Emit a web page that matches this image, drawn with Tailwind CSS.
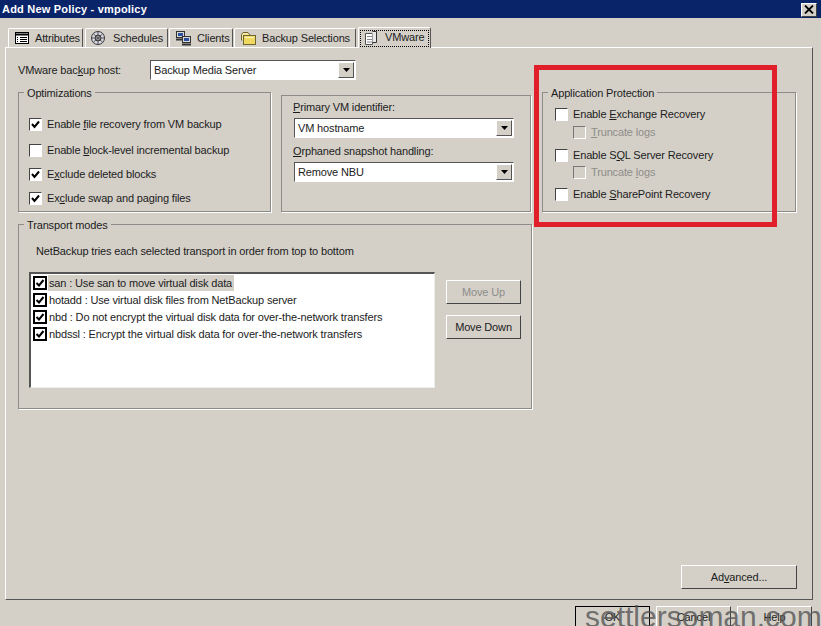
<!DOCTYPE html>
<html lang="en">
<head>
  <meta charset="UTF-8" />
  <title>Add New Policy - vmpolicy</title>
  <script src="https://cdn.jsdelivr.net/npm/@tailwindcss/browser@4"></script>
</head>
<body class="relative w-[821px] h-[626px] overflow-hidden bg-[#d4d0c8] text-[11px] tracking-[-0.15px] leading-[14px] text-[#1c1c1c] font-['Liberation_Sans',sans-serif]">

  <!-- Title bar -->
  <div class="h-[18px] bg-[#0a246a] flex items-center justify-between pl-[2px] pr-[4px] text-white font-bold tracking-[0.2px]">
    <span>Add New Policy - vmpolicy</span>
    <span class="w-[16px] h-[14px] mt-[1px] bg-[#d4d0c8] flex items-center justify-center border-t border-l border-white border-r border-b border-r-[#404040] border-b-[#404040]">
      <svg width="10" height="9" viewBox="0 0 10 9"><path d="M1 0.5L9 8.5M9 0.5L1 8.5" stroke="#000" stroke-width="1.8"/></svg>
    </span>
  </div>

  <!-- Tabs -->
  <div class="flex items-end h-[29px] pl-[8px] whitespace-nowrap">
    <div class="w-[75px] h-[19px] border-t border-l border-white border-r border-r-[#555] rounded-t-[2px] flex items-center pl-[5px] gap-[5px]">
      <svg class="shrink-0" width="16" height="14" viewBox="0 0 16 14"><rect x="1.5" y="1.5" width="13" height="11" fill="#fff" stroke="#000"/><path d="M1 3.5H15" stroke="#000" stroke-width="2"/><path d="M3 6.5H4M3 8.5H4M3 10.5H4M6 6.5H13M6 8.5H13M6 10.5H13" stroke="#000"/></svg>
      <span>Attributes</span>
    </div>
    <div class="ml-[2px] w-[83px] h-[19px] border-t border-l border-white border-r border-r-[#555] rounded-t-[2px] flex items-center pl-[4px] gap-[6px]">
      <svg class="shrink-0" width="17" height="16" viewBox="0 0 17 16"><circle cx="8" cy="8" r="6.5" fill="#d8d8e4" stroke="#333"/><path d="M8 1.5V14.5M1.5 8H14.5M3.5 4L12.5 12M12.5 4L3.5 12" stroke="#555"/><circle cx="8" cy="8" r="3" fill="none" stroke="#333"/></svg>
      <span>Schedules</span>
    </div>
    <div class="ml-[1px] w-[64px] h-[19px] border-t border-l border-white border-r border-r-[#555] rounded-t-[2px] flex items-center pl-[5px] gap-[5px]">
      <svg class="shrink-0" width="17" height="15" viewBox="0 0 17 15"><rect x="1.5" y="0.5" width="8" height="6" fill="#d8d8d8" stroke="#333"/><rect x="3" y="2" width="5" height="3" fill="#2a50a0"/><path d="M1 8.5H9" stroke="#333" stroke-width="2"/><rect x="7.5" y="5.5" width="8" height="6" fill="#d8d8d8" stroke="#333"/><rect x="9" y="7" width="5" height="3" fill="#2a50a0"/><path d="M7 13.5H16" stroke="#333" stroke-width="2"/></svg>
      <span>Clients</span>
    </div>
    <div class="ml-[1px] w-[122px] h-[19px] border-t border-l border-white border-r border-r-[#555] rounded-t-[2px] flex items-center pl-[5px] gap-[5px]">
      <svg class="shrink-0" width="17" height="15" viewBox="0 0 17 15"><path d="M1.5 9.5V3.5L3 1.5H8L10 4" fill="#f4e7a0" stroke="#6e6430"/><rect x="3.5" y="4.5" width="12" height="9" fill="#f0d860" stroke="#6e6430"/><path d="M5 6.5H14" stroke="#fff6c0"/></svg>
      <span>Backup Selections</span>
    </div>
    <div class="ml-[2px] w-[73px] h-[21px] bg-[#d4d0c8] border-t border-l border-white border-r border-r-[#555] rounded-t-[2px] flex items-center p-[1px] relative z-10 -mb-[1px]">
      <div class="flex-1 h-[17px] border border-dotted border-black flex items-center pl-[3px] gap-[6px]">
        <svg class="shrink-0" width="15" height="15" viewBox="0 0 15 15"><path d="M1.5 2.5H8.5V13.5H1.5Z" fill="#fff" stroke="#555"/><path d="M8.5 0.5H12.5V11.5H8.5" fill="#e8e8e8" stroke="#333"/><path d="M3 5.5H8M3 8.5H8M3 11H8" stroke="#888"/></svg>
        <span class="-mt-[2px]">VMware</span>
      </div>
    </div>
  </div>

  <!-- Tab panel -->
  <div class="ml-[5px] w-[808px] h-[553px] border-t border-l border-white border-r border-b border-r-[#555] border-b-[#555] flex flex-col">
    <div class="flex flex-1">
      <!-- left column -->
      <div class="w-[536px] pl-[12px] pt-[12px]">
        <div class="flex items-center h-[20px]">
          <span class="w-[132px] -mt-[1px]">VMware bac<u>k</u>up host:</span>
          <div class="w-[206px] h-[20px] bg-white border-t border-l border-[#555] border-r border-b border-r-white border-b-white flex items-center justify-between pl-[3px] pr-[1px]">
            <span>Backup Media Server</span>
            <span class="w-[16px] h-[16px] bg-[#d4d0c8] border-t border-l border-white border-r border-b border-r-[#555] border-b-[#555] flex items-center justify-center"><svg width="7" height="4" viewBox="0 0 7 4"><path d="M0 0H7L3.5 4Z" fill="#000"/></svg></span>
          </div>
        </div>
        <div class="flex mt-[12px]">
          <!-- Optimizations -->
          <div class="relative w-[253px] h-[120px] border border-[#8e8c88] shadow-[1px_1px_0_#fff] pl-[10px] pt-[23px]">
            <span class="absolute -top-[7px] left-[5px] bg-[#d4d0c8] px-[3px]">Optimizations</span>
            <div class="flex items-center h-[16px] gap-[5px]">
              <span class="w-[13px] h-[13px] bg-white border-t border-l border-[#444] border-r border-b border-r-white border-b-white flex items-center justify-center"><svg width="9" height="9" viewBox="0 0 9 9"><path d="M1 4L3.5 7L8 1.5" fill="none" stroke="#000" stroke-width="2"/></svg></span>
              <span>Enable <u>f</u>ile recovery from VM backup</span>
            </div>
            <div class="flex items-center h-[16px] gap-[5px] mt-[10px]">
              <span class="w-[13px] h-[13px] bg-white border-t border-l border-[#444] border-r border-b border-r-white border-b-white"></span>
              <span>Enable <u>b</u>lock-level incremental backup</span>
            </div>
            <div class="flex items-center h-[16px] gap-[5px] mt-[8px]">
              <span class="w-[13px] h-[13px] bg-white border-t border-l border-[#444] border-r border-b border-r-white border-b-white flex items-center justify-center"><svg width="9" height="9" viewBox="0 0 9 9"><path d="M1 4L3.5 7L8 1.5" fill="none" stroke="#000" stroke-width="2"/></svg></span>
              <span>E<u>x</u>clude deleted blocks</span>
            </div>
            <div class="flex items-center h-[16px] gap-[5px] mt-[8px]">
              <span class="w-[13px] h-[13px] bg-white border-t border-l border-[#444] border-r border-b border-r-white border-b-white flex items-center justify-center"><svg width="9" height="9" viewBox="0 0 9 9"><path d="M1 4L3.5 7L8 1.5" fill="none" stroke="#000" stroke-width="2"/></svg></span>
              <span>Ex<u>c</u>lude swap and paging files</span>
            </div>
          </div>
          <!-- VM identifier -->
          <div class="ml-[10px] mt-[3px] w-[250px] h-[117px] border border-[#8e8c88] shadow-[1px_1px_0_#fff] pl-[11px] pt-[4px]">
            <div class="h-[14px]"><u>P</u>rimary VM identifier:</div>
            <div class="mt-[4px] ml-[1px] w-[220px] h-[20px] bg-white border-t border-l border-[#555] border-r border-b border-r-white border-b-white flex items-center justify-between pl-[3px] pr-[1px]">
              <span>VM hostname</span>
              <span class="w-[16px] h-[16px] bg-[#d4d0c8] border-t border-l border-white border-r border-b border-r-[#555] border-b-[#555] flex items-center justify-center"><svg width="7" height="4" viewBox="0 0 7 4"><path d="M0 0H7L3.5 4Z" fill="#000"/></svg></span>
            </div>
            <div class="mt-[6px] h-[14px]"><u>O</u>rphaned snapshot handling:</div>
            <div class="mt-[4px] ml-[1px] w-[220px] h-[20px] bg-white border-t border-l border-[#555] border-r border-b border-r-white border-b-white flex items-center justify-between pl-[3px] pr-[1px]">
              <span>Remove NBU</span>
              <span class="w-[16px] h-[16px] bg-[#d4d0c8] border-t border-l border-white border-r border-b border-r-[#555] border-b-[#555] flex items-center justify-center"><svg width="7" height="4" viewBox="0 0 7 4"><path d="M0 0H7L3.5 4Z" fill="#000"/></svg></span>
            </div>
          </div>
        </div>
        <!-- Transport modes -->
        <div class="relative mt-[12px] w-[514px] h-[185px] border border-[#8e8c88] shadow-[1px_1px_0_#fff] pl-[10px] pt-[47px]">
          <span class="absolute -top-[7px] left-[5px] bg-[#d4d0c8] px-[3px]">Transport modes</span>
          <span class="absolute top-[19px] left-[17px]">NetBackup tries each selected transport in order from top to bottom</span>
          <div class="flex">
            <div class="w-[406px] h-[116px] bg-white border-t-2 border-l-2 border-[#555] border-r border-b border-r-[#eee] border-b-[#eee] pl-[2px] whitespace-nowrap">
              <div class="flex items-center h-[17px]">
                <span class="w-[14px] h-[14px] border-2 border-black flex items-center justify-center mr-[1px]"><svg width="10" height="10" viewBox="0 0 10 10"><path d="M1.5 5L4 7.5L8.5 2" fill="none" stroke="#000" stroke-width="2"/></svg></span>
                <span class="bg-[#d4d0c8] w-[186px] h-[16px] leading-[16px] pl-[1px]">san : Use san to move virtual disk data</span>
              </div>
              <div class="flex items-center h-[17px]">
                <span class="w-[14px] h-[14px] border-2 border-black flex items-center justify-center mr-[1px]"><svg width="10" height="10" viewBox="0 0 10 10"><path d="M1.5 5L4 7.5L8.5 2" fill="none" stroke="#000" stroke-width="2"/></svg></span>
                <span class="pl-[1px]">hotadd : Use virtual disk files from NetBackup server</span>
              </div>
              <div class="flex items-center h-[17px]">
                <span class="w-[14px] h-[14px] border-2 border-black flex items-center justify-center mr-[1px]"><svg width="10" height="10" viewBox="0 0 10 10"><path d="M1.5 5L4 7.5L8.5 2" fill="none" stroke="#000" stroke-width="2"/></svg></span>
                <span class="pl-[1px]">nbd : Do not encrypt the virtual disk data for over-the-network transfers</span>
              </div>
              <div class="flex items-center h-[17px]">
                <span class="w-[14px] h-[14px] border-2 border-black flex items-center justify-center mr-[1px]"><svg width="10" height="10" viewBox="0 0 10 10"><path d="M1.5 5L4 7.5L8.5 2" fill="none" stroke="#000" stroke-width="2"/></svg></span>
                <span class="pl-[1px]">nbdssl : Encrypt the virtual disk data for over-the-network transfers</span>
              </div>
            </div>
            <div class="ml-[11px] mt-[8px]">
              <div class="w-[75px] h-[24px] border-t border-l border-white border-r border-b border-r-[#444] border-b-[#444] flex items-center justify-center text-[#8f8d88]">Move Up</div>
              <div class="mt-[11px] w-[75px] h-[24px] border-t border-l border-white border-r border-b border-r-[#444] border-b-[#444] flex items-center justify-center">Move Down</div>
            </div>
          </div>
        </div>
      </div>
      <!-- right column -->
      <div class="pt-[44px]">
        <div class="relative w-[254px] h-[120px] border border-[#8e8c88] shadow-[1px_1px_0_#fff] pl-[12px] pt-[13px]">
          <span class="absolute -top-[7px] left-[5px] bg-[#d4d0c8] px-[3px]">Application Protection</span>
          <div class="flex items-center h-[16px] gap-[5px]">
            <span class="w-[13px] h-[13px] bg-white border-t border-l border-[#444] border-r border-b border-r-white border-b-white"></span>
            <span>Enable <u>E</u>xchange Recovery</span>
          </div>
          <div class="flex items-center h-[16px] gap-[5px] mt-[2px] ml-[18px] text-[#8f8d88]">
            <span class="w-[13px] h-[13px] bg-[#d4d0c8] border-t border-l border-[#777] border-r border-b border-r-white border-b-white"></span>
            <span><u>T</u>runcate logs</span>
          </div>
          <div class="flex items-center h-[16px] gap-[5px] mt-[7px]">
            <span class="w-[13px] h-[13px] bg-white border-t border-l border-[#444] border-r border-b border-r-white border-b-white"></span>
            <span>Enable S<u>Q</u>L Server Recovery</span>
          </div>
          <div class="flex items-center h-[16px] gap-[5px] mt-[1px] ml-[18px] text-[#8f8d88]">
            <span class="w-[13px] h-[13px] bg-[#d4d0c8] border-t border-l border-[#777] border-r border-b border-r-white border-b-white"></span>
            <span>Truncate <u>l</u>ogs</span>
          </div>
          <div class="flex items-center h-[16px] gap-[5px] mt-[6px]">
            <span class="w-[13px] h-[13px] bg-white border-t border-l border-[#444] border-r border-b border-r-white border-b-white"></span>
            <span>Enable <u>S</u>harePoint Recovery</span>
          </div>
        </div>
      </div>
    </div>
    <div class="flex justify-end pr-[15px] pb-[10px]">
      <div class="w-[116px] h-[24px] border-t border-l border-white border-r border-b border-r-[#444] border-b-[#444] flex items-center justify-center">Ad<u>v</u>anced...</div>
    </div>
  </div>

  <!-- Dialog buttons -->
  <div class="flex justify-end gap-[6px] pr-[9px] mt-[6px]">
    <div class="w-[75px] h-[24px] border border-black flex justify-center pt-[3px]">OK</div>
    <div class="w-[75px] h-[24px] border-t border-l border-white border-r border-r-[#444] flex justify-center pt-[3px]">Cancel</div>
    <div class="w-[75px] h-[24px] border-t border-l border-white border-r border-r-[#444] flex justify-center pt-[3px]">Help</div>
  </div>

  <!-- Highlight drawn on the screenshot -->
  <div class="absolute left-[534px] top-[65px] w-[243px] h-[162px] border-[5px] border-[#e01f2b]"></div>

  <!-- Watermark -->
  <div class="absolute left-[585px] top-[599px] text-[30px] leading-[36px] tracking-normal whitespace-nowrap text-[#555]/80">settlersoman.com</div>
</body>
</html>
